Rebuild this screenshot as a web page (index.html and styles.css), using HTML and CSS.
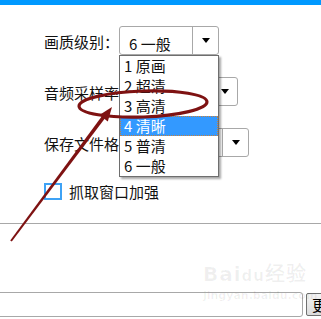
FILE: index.html
```html
<!DOCTYPE html>
<html lang="zh-CN">
<head>
    <meta charset="UTF-8">
    <meta name="viewport" content="width=device-width, initial-scale=1.0">
    <title>录制设置</title>
    <link rel="stylesheet" href="styles.css">
</head>
<body>

    <div class="topbar"></div>

    <div class="settings">
        <div class="row">
            <span class="label">画质级别：</span>
            <div class="select select-quality">
                <span class="value">6 一般</span>
                <span class="btn"><i class="caret"></i></span>

                <ul class="dropdown">
                    <li>1 原画</li>
                    <li>2 超清</li>
                    <li>3 高清</li>
                    <li class="active">4 清晰</li>
                    <li>5 普清</li>
                    <li>6 一般</li>
                </ul>
            </div>
        </div>

        <div class="row">
            <span class="label">音频采样率：</span>
            <div class="select select-audio">
                <span class="value"></span>
                <span class="btn"><i class="caret"></i></span>
            </div>
        </div>

        <div class="row">
            <span class="label">保存文件格式：</span>
            <div class="select">
                <span class="value"></span>
                <span class="btn"><i class="caret"></i></span>
            </div>
        </div>

        <label class="check-row">
            <span class="checkbox"></span>
            <span>抓取窗口加强</span>
        </label>
    </div>

    <div class="divider"></div>

    <div class="bottom">
        <input type="text" class="path-input">
        <button type="button" class="more-btn">更改</button>
    </div>

    <div class="watermark">
        <span class="wm-logo">Bai<b>du</b>经验</span>
        <span class="wm-url">jingyan.baidu.com</span>
    </div>

    <!-- hand drawn annotation -->
    <svg class="annotation" width="321" height="319" viewBox="0 0 321 319">
        <ellipse cx="143" cy="104" rx="64" ry="13" transform="rotate(-2 143 104)"
                 fill="none" stroke="#7e1212" stroke-width="3.2"/>
        <polygon points="10.2,240.4 11.8,241.6 105.2,118 102.2,115.8" fill="#7e1212"/>
        <polygon points="112,107 99.4,115 107.8,121.4" fill="#7e1212"/>
    </svg>

</body>
</html>
```

FILE: styles.css
```css
body {
    margin: 0;
    width: 321px;
    height: 319px;
    overflow: hidden;
    position: relative;
    background: #fff;
    color: #111;
    font-family: "Noto Sans CJK SC", "Microsoft YaHei", sans-serif;
    font-size: 15px;
}
.topbar {
    height: 5px;
    background-color: #0099ff;
}
.settings {
    padding: 21px 0 0 44px;
    display: flex;
    flex-direction: column;
    gap: 22px;
}
.row {
    display: flex;
    align-items: center;
    height: 29px;
}
.label {
    line-height: 20px;
    padding-top: 2px;
    white-space: nowrap;
}
.select {
    position: relative;
    display: flex;
    width: 100px;
    height: 29px;
    box-sizing: border-box;
    border: 1px solid #a8a8a8;
    border-radius: 3px;
    background: #fff;
}
.select-audio {
    width: 104px;
}
.value {
    flex: 1;
    padding: 8px 0 0 9px;
    line-height: 18px;
    white-space: nowrap;
}
.btn {
    width: 25px;
    border-left: 1px solid #a8a8a8;
    display: flex;
    align-items: center;
    justify-content: center;
}
.caret {
    width: 0;
    height: 0;
    border-left: 4px solid transparent;
    border-right: 4px solid transparent;
    border-top: 5px solid #000;
}
.dropdown {
    position: absolute;
    top: 28px;
    left: -1px;
    z-index: 5;
    width: 100px;
    margin: 0;
    padding: 0;
    list-style: none;
    box-sizing: border-box;
    border: 1px solid #6e6e6e;
    background: #fff;
    box-shadow: 2px 2px 2px rgba(0, 0, 0, 0.35);
}
.dropdown li {
    height: 20px;
    line-height: 20px;
    padding-left: 4px;
    white-space: nowrap;
}
.dropdown li.active {
    background-color: #3399ff;
    color: #fff;
    outline: 1px dotted #c8803a;
    outline-offset: -1px;
}
.check-row {
    display: flex;
    align-items: center;
    gap: 7px;
    height: 18px;
    margin-top: 3px;
}
.checkbox {
    width: 18px;
    height: 17px;
    box-sizing: border-box;
    border: 2px solid #3ea2f5;
    background: #fff;
}
.divider {
    margin-top: 23px;
    height: 1px;
    background-color: #a8a8a8;
}
.bottom {
    display: flex;
    gap: 3px;
    margin-top: 68px;
}
.path-input {
    width: 306px;
    height: 25px;
    margin: 0 0 0 -3px;
    box-sizing: border-box;
    border: 1px solid #a8a8a8;
    border-radius: 3px;
    background: #fff;
    flex-shrink: 0;
}
.more-btn {
    flex-shrink: 0;
    width: 40px;
    height: 23px;
    margin-top: 1px;
    padding: 0 0 0 5px;
    text-align: left;
    border: 1px solid #707070;
    border-radius: 2px;
    background: linear-gradient(#f4f4f4, #dcdcdc);
    font-family: "Noto Sans CJK SC", sans-serif;
    font-size: 15px;
    line-height: 20px;
    color: #000;
    white-space: nowrap;
}
.watermark {
    position: absolute;
    left: 203px;
    top: 262px;
    display: flex;
    flex-direction: column;
    color: rgba(0, 0, 0, 0.06);
}
.wm-logo {
    font-family: "DejaVu Sans", sans-serif;
    font-size: 20px;
    font-weight: bold;
    line-height: 24px;
    letter-spacing: 1px;
}
.wm-logo b {
    font-size: 15px;
}
.wm-url {
    font-family: "DejaVu Sans", sans-serif;
    font-size: 11px;
    line-height: 16px;
    font-weight: bold;
}
.annotation {
    position: absolute;
    left: 0;
    top: 0;
    z-index: 10;
    pointer-events: none;
}
```
